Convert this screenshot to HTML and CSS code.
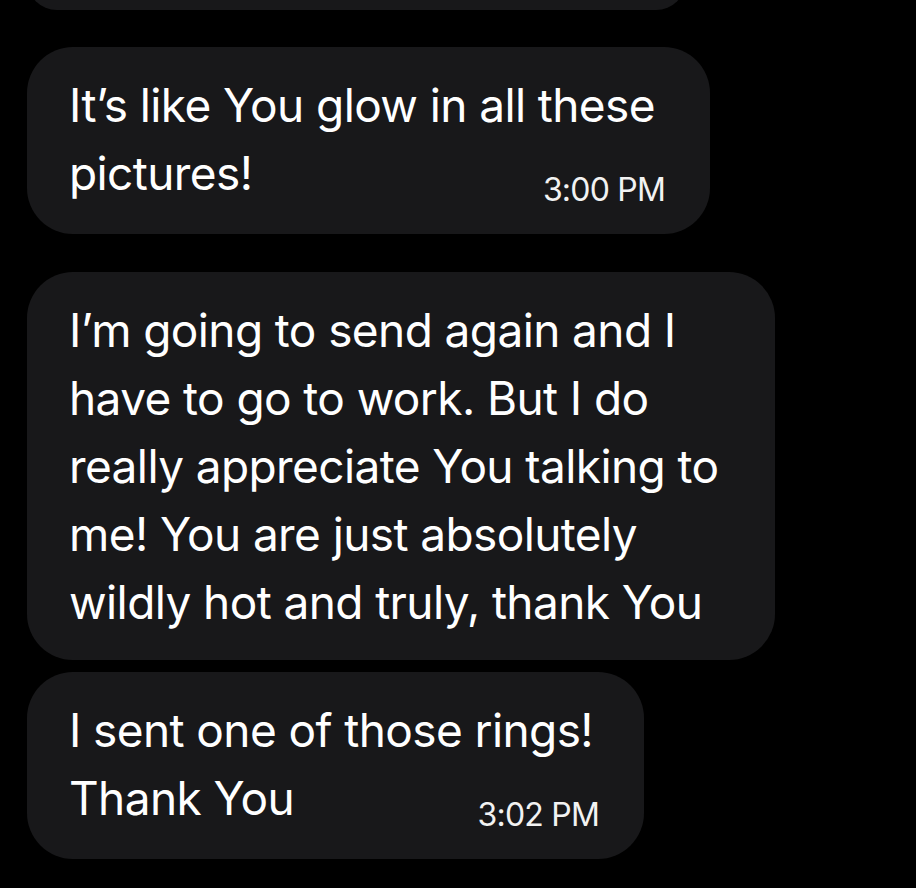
FILE: index.html
```html
<!DOCTYPE html>
<html lang="en">
<head>
<meta charset="utf-8">
<title>Messages</title>
<link rel="stylesheet" href="styles.css">
</head>
<body>
<main class="thread">
  <div class="bubble bubble-prev"></div>
  <div class="bubble bubble-a">
    <p class="msg">It’s like You glow in all these<br>pictures!</p>
    <span class="time">3:00 PM</span>
  </div>
  <div class="bubble bubble-b">
    <p class="msg">I’m going to send again and I have to go to work. But I do really appreciate You talking to me! You are just absolutely wildly hot and truly, thank You</p>
  </div>
  <div class="bubble bubble-c">
    <p class="msg">I sent one of those rings!<br>Thank You</p>
    <span class="time">3:02 PM</span>
  </div>
</main>
</body>
</html>
```

FILE: styles.css
```css
html, body {
  margin: 0;
  padding: 0;
  background: #000;
}

body {
  width: 916px;
  height: 888px;
  overflow: hidden;
  font-family: Inter, "Noto Sans", "DejaVu Sans", sans-serif;
}

.thread {
  display: flex;
  flex-direction: column;
  align-items: flex-start;
  padding-left: 27px;
}

.bubble {
  box-sizing: border-box;
  background: #18181a;
  color: #fff;
  border-radius: 46px;
  padding: 24px 45px 24px 42px;
  display: flex;
  flex-direction: column;
}

.msg {
  margin: 0;
  font-size: 46px;
  line-height: 68px;
  letter-spacing: -0.6px;
}

.time {
  align-self: flex-end;
  font-size: 32px;
  line-height: 40px;
  margin-top: -37px;
  letter-spacing: -0.8px;
  color: #f2f2f2;
}

.bubble-prev {
  width: 659px;
  height: 60px;
  margin-top: -50px;
  margin-bottom: 37px;
}

.bubble-a {
  width: 683px;
  margin-bottom: 38px;
}

.bubble-b {
  width: 748px;
  margin-bottom: 12px;
}

.bubble-c {
  width: 617px;
}
```
